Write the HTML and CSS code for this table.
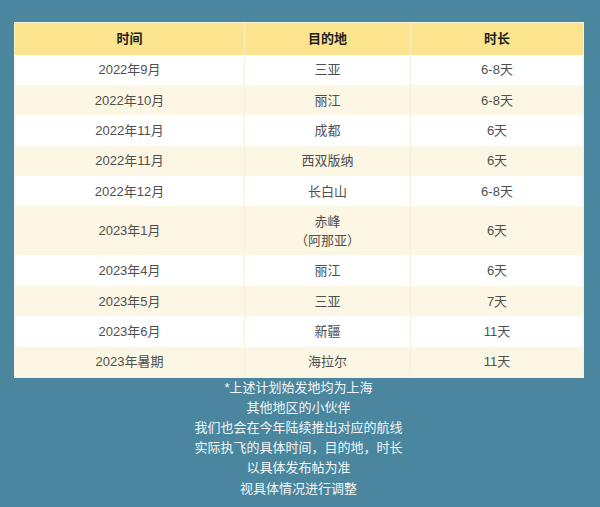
FILE: index.html
```html
<!DOCTYPE html>
<html lang="zh-CN">
<head>
<meta charset="utf-8">
<link rel="stylesheet" href="styles.css">
</head>
<body>
<main class="page">
  <table class="plan">
    <colgroup><col class="c1"><col class="c2"><col class="c3"></colgroup>
    <thead>
      <tr><th>时间</th><th>目的地</th><th>时长</th></tr>
    </thead>
    <tbody>
      <tr><td>2022年9月</td><td>三亚</td><td>6-8天</td></tr>
      <tr><td>2022年10月</td><td>丽江</td><td>6-8天</td></tr>
      <tr><td>2022年11月</td><td>成都</td><td>6天</td></tr>
      <tr><td>2022年11月</td><td>西双版纳</td><td>6天</td></tr>
      <tr><td>2022年12月</td><td>长白山</td><td>6-8天</td></tr>
      <tr class="tall"><td>2023年1月</td><td>赤峰<br>（阿那亚）</td><td>6天</td></tr>
      <tr><td>2023年4月</td><td>丽江</td><td>6天</td></tr>
      <tr><td>2023年5月</td><td>三亚</td><td>7天</td></tr>
      <tr><td>2023年6月</td><td>新疆</td><td>11天</td></tr>
      <tr><td>2023年暑期</td><td>海拉尔</td><td>11天</td></tr>
    </tbody>
  </table>
  <div class="notes">
    <p>*上述计划始发地均为上海</p>
    <p>其他地区的小伙伴</p>
    <p>我们也会在今年陆续推出对应的航线</p>
    <p>实际执飞的具体时间，目的地，时长</p>
    <p>以具体发布帖为准</p>
    <p>视具体情况进行调整</p>
  </div>
</main>
</body>
</html>
```
FILE: styles.css
```css
html, body {
  margin: 0;
  padding: 0;
  background: #4a879f;
}
body {
  font-family: "Liberation Sans", "Noto Sans CJK SC", sans-serif;
  font-size: 13px;
}
.page {
  width: 600px;
  height: 507px;
  box-sizing: border-box;
  padding: 22px 17px 0 14px;
  overflow: hidden;
}
.plan {
  width: 569px;
  border-collapse: collapse;
  table-layout: fixed;
  border: 1px solid #f7f1df;
}
.c1 { width: 230px; }
.c2 { width: 166px; }
.c3 { width: 173px; }
.plan thead tr { height: 32px; }
.plan tbody tr { height: 30.4px; }
.plan tbody tr.tall { height: 49px; }
.plan th {
  background: #fbe48d;
  color: #1f1f1f;
  font-weight: bold;
  line-height: 18px;
  padding: 0;
  border-left: 1px solid #fdf3c8;
  border-right: 1px solid #fdf3c8;
  text-align: center;
  vertical-align: middle;
}
.plan td {
  color: #4f4f4f;
  line-height: 19px;
  padding: 0;
  text-align: center;
  vertical-align: middle;
  border: 1px solid #f6f0e0;
  border-top: none;
  border-bottom: none;
}
.plan tbody tr:nth-child(odd) td { background: #ffffff; }
.plan tbody tr:nth-child(even) td { background: #fcf6e4; }
.notes {
  color: #f2f6f8;
  text-align: center;
  line-height: 20.2px;
  font-size: 13px;
}
.notes p { margin: 0; }
```
